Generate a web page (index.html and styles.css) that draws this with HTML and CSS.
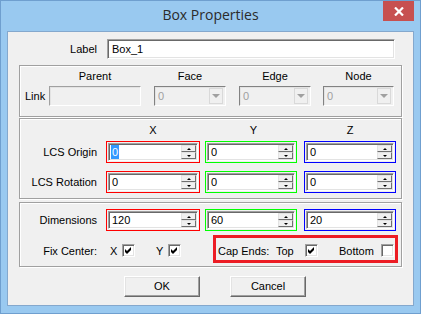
FILE: index.html
```html
<!DOCTYPE html>
<html lang="en">
<head>
    <meta charset="UTF-8">
    <title>Box Properties</title>
    <link rel="stylesheet" href="styles.css">
</head>
<body>
    <div class="window">
        <div class="titlebar">
            <span></span>
            <span class="title">Box Properties</span>
            <span class="close-btn">
                <svg width="10" height="9" viewBox="0 0 10 9"><path d="M1 0.5 L9 8.5 M9 0.5 L1 8.5" stroke="#fff" stroke-width="2.2"/></svg>
            </span>
        </div>

        <div class="client">
            <div class="label-row">
                <span class="row-label">Label</span>
                <div class="edit label-edit">Box_1</div>
            </div>

            <div class="group link-group">
                <span class="link-label">Link</span>
                <div class="col col-parent">
                    <span class="col-head">Parent</span>
                    <div class="edit disabled"></div>
                </div>
                <div class="col col-face">
                    <span class="col-head">Face</span>
                    <div class="combo"><span class="combo-val">0</span><span class="drop"><i></i></span></div>
                </div>
                <div class="col col-edge">
                    <span class="col-head">Edge</span>
                    <div class="combo"><span class="combo-val">0</span><span class="drop"><i></i></span></div>
                </div>
                <div class="col col-node">
                    <span class="col-head">Node</span>
                    <div class="combo"><span class="combo-val">0</span><span class="drop"><i></i></span></div>
                </div>
            </div>

            <div class="group lcs-group">
                <div class="head-row">
                    <span class="row-label"></span>
                    <span class="axis axis-x">X</span>
                    <span class="axis axis-y">Y</span>
                    <span class="axis axis-z">Z</span>
                </div>
                <div class="spin-row">
                    <span class="row-label">LCS Origin</span>
                    <div class="spin red"><div class="field"><span class="val"><span class="sel">0</span></span><span class="spin-btns"><b class="up"></b><b class="down"></b></span></div></div>
                    <div class="spin green"><div class="field"><span class="val">0</span><span class="spin-btns"><b class="up"></b><b class="down"></b></span></div></div>
                    <div class="spin blue"><div class="field"><span class="val">0</span><span class="spin-btns"><b class="up"></b><b class="down"></b></span></div></div>
                </div>
                <div class="spin-row second">
                    <span class="row-label">LCS Rotation</span>
                    <div class="spin red"><div class="field"><span class="val">0</span><span class="spin-btns"><b class="up"></b><b class="down"></b></span></div></div>
                    <div class="spin green"><div class="field"><span class="val">0</span><span class="spin-btns"><b class="up"></b><b class="down"></b></span></div></div>
                    <div class="spin blue"><div class="field"><span class="val">0</span><span class="spin-btns"><b class="up"></b><b class="down"></b></span></div></div>
                </div>
            </div>

            <div class="group dim-group">
                <div class="spin-row">
                    <span class="row-label">Dimensions</span>
                    <div class="spin red"><div class="field"><span class="val">120</span><span class="spin-btns"><b class="up"></b><b class="down"></b></span></div></div>
                    <div class="spin green"><div class="field"><span class="val">60</span><span class="spin-btns"><b class="up"></b><b class="down"></b></span></div></div>
                    <div class="spin blue"><div class="field"><span class="val">20</span><span class="spin-btns"><b class="up"></b><b class="down"></b></span></div></div>
                </div>
                <div class="fix-row">
                    <div class="fix-left">
                        <span class="row-label">Fix Center:</span>
                        <span class="axis-label">X</span>
                        <span class="check"><svg width="7" height="7" viewBox="0 0 7 7"><polygon points="0,2 2,4 6,0 6,3 2,7 0,5" fill="#000"/></svg></span>
                        <span class="axis-label y-label">Y</span>
                        <span class="check"><svg width="7" height="7" viewBox="0 0 7 7"><polygon points="0,2 2,4 6,0 6,3 2,7 0,5" fill="#000"/></svg></span>
                    </div>
                    <div class="cap-box">
                        <span class="cap-label">Cap Ends:</span>
                        <span class="top-label">Top</span>
                        <span class="check"><svg width="7" height="7" viewBox="0 0 7 7"><polygon points="0,2 2,4 6,0 6,3 2,7 0,5" fill="#000"/></svg></span>
                        <span class="bottom-label">Bottom</span>
                        <span class="check"></span>
                    </div>
                </div>
            </div>

            <div class="buttons">
                <div class="btn">OK</div>
                <div class="btn">Cancel</div>
            </div>
        </div>
    </div>
</body>
</html>
```

FILE: styles.css
```css
* {
    box-sizing: border-box;
}

body {
    margin: 0;
    font-family: "Liberation Sans", Arial, sans-serif;
    font-size: 11px;
    color: #000;
}

.window {
    width: 421px;
    height: 314px;
    background-color: #99c9f0;
    border: 1px solid #6f9fcf;
    display: flex;
    flex-direction: column;
}

.titlebar {
    height: 30px;
    padding: 0 6px;
    display: grid;
    grid-template-columns: 1fr auto 1fr;
    align-items: start;
}

.title {
    font-family: "Open Sans", "Noto Sans", sans-serif;
    font-size: 14px;
    line-height: 27px;
    color: #2b2b2b;
}

.close-btn {
    justify-self: end;
    width: 31px;
    height: 20px;
    background-color: #c75050;
    display: flex;
    align-items: center;
    justify-content: center;
}

.client {
    margin: 0 6px 7px;
    height: 275px;
    border: 1px solid #84a8cd;
    background-color: #f0f0f0;
    padding: 7px 11px 0;
}

/* shared controls */
.row-label {
    width: 86px;
    flex: none;
    text-align: right;
    padding-right: 9px;
    white-space: nowrap;
}

.edit {
    height: 20px;
    background-color: #fff;
    border: 1px solid;
    border-color: #a0a0a0 #fff #fff #a0a0a0;
    box-shadow: inset 1px 1px 0 #696969, inset -1px -1px 0 #e3e3e3;
    padding: 0 4px;
    line-height: 18px;
}

.edit.disabled {
    background-color: #f0f0f0;
    box-shadow: inset 1px 1px 0 #e3e3e3;
}

.group {
    border: 1px solid #a0a0a0;
    box-shadow: inset 1px 1px 0 #fff, 1px 1px 0 #fff;
}

/* label row */
.label-row {
    display: flex;
    align-items: center;
    height: 20px;
}

.label-row .row-label {
    width: 88px;
    padding-right: 10px;
}

.label-edit {
    width: 288px;
}

/* link group */
.link-group {
    margin-top: 6px;
    height: 52px;
    padding-bottom: 10px;
    display: flex;
    align-items: flex-end;
}

.link-label {
    width: 29px;
    padding-left: 5px;
    line-height: 20px;
}

.col {
    display: flex;
    flex-direction: column;
}

.col-head {
    height: 20px;
    line-height: 20px;
    text-align: center;
}

.col-parent { width: 92px; margin-right: 13px; }
.col-face { width: 72px; margin-right: 13px; }
.col-edge { width: 72px; margin-right: 12px; }
.col-node { width: 71px; }

.combo {
    height: 20px;
    display: flex;
    align-items: center;
    background-color: #f0f0f0;
    border: 1px solid;
    border-color: #828282 #fff #fff #828282;
    box-shadow: inset 1px 1px 0 #e3e3e3;
    padding: 1px 2px 1px 2px;
}

.combo-val {
    flex: 1;
    color: #a0a0a0;
    padding-left: 1px;
}

.drop {
    width: 14px;
    height: 16px;
    border: 1px solid #d9d9d9;
    background-color: #f0f0f0;
    display: flex;
    align-items: center;
    justify-content: center;
}

.drop i {
    width: 0;
    height: 0;
    border-left: 4px solid transparent;
    border-right: 4px solid transparent;
    border-top: 4px solid #a0a0a0;
}

/* lcs + dimensions */
.lcs-group {
    margin-top: 1px;
    height: 81px;
    padding-bottom: 5px;
}

.head-row {
    display: flex;
    height: 22px;
    line-height: 22px;
}

.axis {
    text-align: center;
}

.axis-x { width: 94px; margin-right: 5px; }
.axis-y { width: 92px; margin-right: 7px; padding-left: 5px; }
.axis-z { width: 92px; }

.spin-row {
    display: flex;
    align-items: center;
    height: 22px;
}

.spin-row.second {
    margin-top: 8px;
}

.spin {
    height: 22px;
    border: 1px solid;
    padding: 1px;
}

.spin.red { width: 94px; border-color: #ff0000; margin-right: 5px; }
.spin.green { width: 92px; border-color: #00ff00; margin-right: 7px; }
.spin.blue { width: 92px; border-color: #0000ff; }

.field {
    height: 18px;
    display: flex;
    background-color: #fff;
    border: 1px solid;
    border-color: #a0a0a0 #fff #fff #a0a0a0;
    box-shadow: inset 1px 1px 0 #696969, inset -1px -1px 0 #e3e3e3;
    padding: 1px;
}

.val {
    flex: 1;
    padding-left: 2px;
    line-height: 14px;
}

.sel {
    display: inline-block;
    background-color: #3399ff;
    color: #fff;
    padding: 0 1px;
    margin-left: -1px;
}

.spin-btns {
    width: 15px;
    display: flex;
    flex-direction: column;
}

.spin-btns b {
    height: 7px;
    background-color: #f0f0f0;
    border: 1px solid;
    border-color: #e3e3e3 #707070 #707070 #e3e3e3;
    display: flex;
    align-items: center;
    justify-content: center;
}

.spin-btns b::after {
    content: "";
    width: 0;
    height: 0;
    border-left: 2px solid transparent;
    border-right: 2px solid transparent;
}

.spin-btns .up::after { border-bottom: 2px solid #000; }
.spin-btns .down::after { border-top: 2px solid #000; }

.dim-group {
    margin-top: 3px;
    height: 65px;
    padding-top: 6px;
}

/* fix center / cap ends */
.fix-row {
    display: flex;
    height: 28px;
    margin-top: 4px;
}

.fix-left {
    display: flex;
    align-items: center;
    padding-top: 3px;
}

.axis-label {
    width: 12px;
    margin-left: 4px;
}

.axis-label.y-label {
    margin-left: 21px;
}

.check {
    width: 13px;
    height: 13px;
    flex: none;
    background-color: #fff;
    border: 1px solid;
    border-color: #a0a0a0 #fff #fff #a0a0a0;
    box-shadow: inset 1px 1px 0 #696969, inset -1px -1px 0 #e3e3e3;
    display: flex;
    align-items: center;
    justify-content: center;
}

.cap-box {
    width: 185px;
    height: 28px;
    margin-left: 32px;
    border: 3px solid #ec1c24;
    padding: 3px 0 0 2px;
    display: flex;
    align-items: center;
}

.cap-label { width: 58px; }
.top-label { width: 29px; }
.bottom-label { width: 42px; margin-left: 21px; }

/* dialog buttons */
.buttons {
    margin-top: 9px;
    padding-left: 105px;
    display: flex;
    gap: 30px;
}

.btn {
    width: 76px;
    height: 21px;
    background-color: #f0f0f0;
    border: 1px solid;
    border-color: #fff #696969 #696969 #fff;
    box-shadow: inset -1px -1px 0 #a0a0a0, inset 1px 1px 0 #e3e3e3;
    text-align: center;
    line-height: 19px;
}
```
